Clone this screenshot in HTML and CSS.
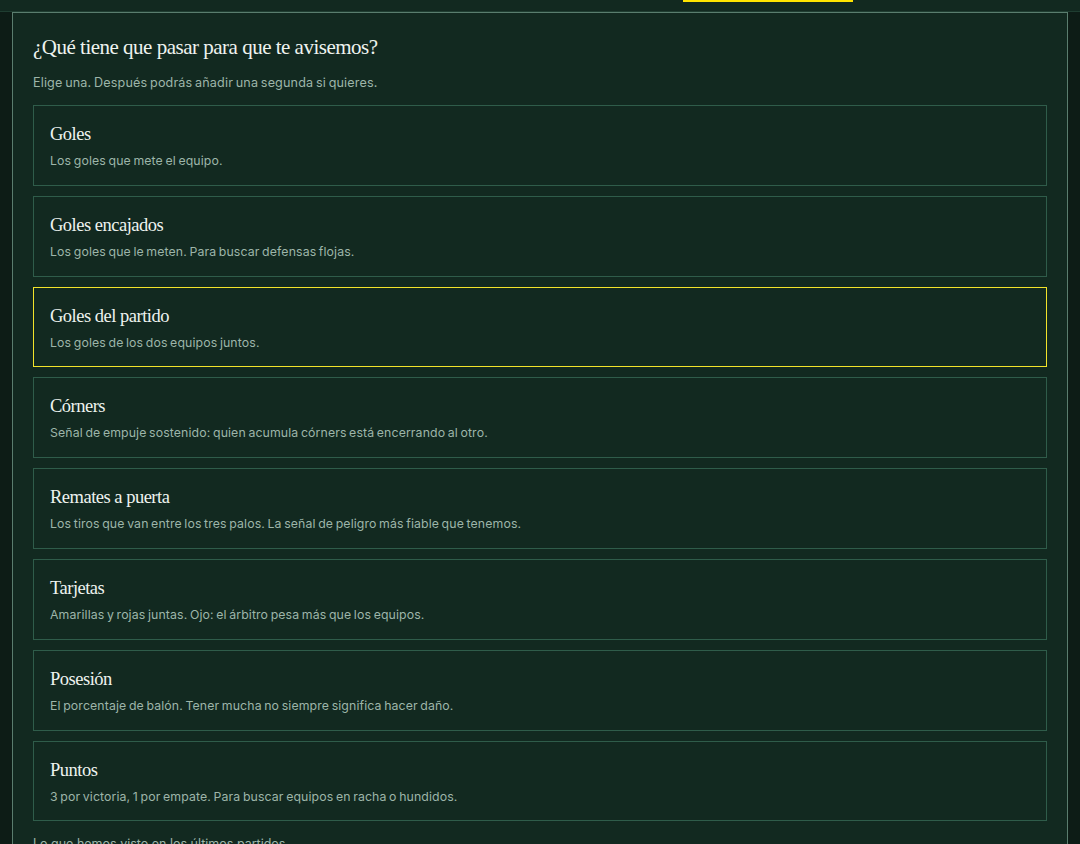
FILE: index.html
```html
<!DOCTYPE html>
<html lang="es">
<head>
<meta charset="utf-8">
<title>Avisos</title>
<link rel="stylesheet" href="styles.css">
</head>
<body>
<header class="topbar">
  <nav class="tabs">
    <span class="tab"></span>
    <span class="tab tab-active"></span>
  </nav>
</header>
<main class="main">
  <section class="panel">
    <h1 class="panel-title">¿Qué tiene que pasar para que te avisemos?</h1>
    <p class="panel-sub">Elige una. Después podrás añadir una segunda si quieres.</p>
    <ul class="options">
      <li class="option"><h2 class="option-title">Goles</h2><p class="option-desc">Los goles que mete el equipo.</p></li>
      <li class="option"><h2 class="option-title">Goles encajados</h2><p class="option-desc">Los goles que le meten. Para buscar defensas flojas.</p></li>
      <li class="option option-selected"><h2 class="option-title">Goles del partido</h2><p class="option-desc">Los goles de los dos equipos juntos.</p></li>
      <li class="option"><h2 class="option-title">Córners</h2><p class="option-desc">Señal de empuje sostenido: quien acumula córners está encerrando al otro.</p></li>
      <li class="option"><h2 class="option-title">Remates a puerta</h2><p class="option-desc">Los tiros que van entre los tres palos. La señal de peligro más fiable que tenemos.</p></li>
      <li class="option"><h2 class="option-title">Tarjetas</h2><p class="option-desc">Amarillas y rojas juntas. Ojo: el árbitro pesa más que los equipos.</p></li>
      <li class="option"><h2 class="option-title">Posesión</h2><p class="option-desc">El porcentaje de balón. Tener mucha no siempre significa hacer daño.</p></li>
      <li class="option"><h2 class="option-title">Puntos</h2><p class="option-desc">3 por victoria, 1 por empate. Para buscar equipos en racha o hundidos.</p></li>
    </ul>
    <p class="panel-foot">Lo que hemos visto en los últimos partidos</p>
  </section>
</main>
</body>
</html>
```
FILE: styles.css
```css
* { box-sizing: border-box; }
html, body { margin: 0; padding: 0; }
body {
  background: #0d1c16;
  font-family: "Inter", "Liberation Sans", sans-serif;
  color: #e8efe9;
  height: 844px;
  overflow: hidden;
}
.topbar {
  height: 12px;
  background: #122920;
  border-bottom: 1px solid #1f3d31;
}
.tabs {
  display: flex;
  padding-left: 513px;
  height: 100%;
}
.tab { width: 170px; }
.tab-active {
  height: 2px;
  background: #ffe400;
}
.main {
  padding: 0 12px;
}
.panel {
  background: #122920;
  border: 1px solid #5a7d6e;
  border-bottom: none;
  padding: 20px 20px 0 20px;
  min-height: 840px;
}
.panel-title {
  margin: 0;
  font-family: "Liberation Serif", serif;
  font-weight: normal;
  font-size: 21px;
  line-height: 28px;
  letter-spacing: -0.5px;
  color: #eef3ef;
}
.panel-sub {
  margin: 13px 0 13px;
  font-size: 12.6px;
  line-height: 18px;
  letter-spacing: 0.15px;
  word-spacing: -1px;
  color: #9db5a9;
}
.options {
  list-style: none;
  margin: 0;
  padding: 0;
  display: flex;
  flex-direction: column;
  gap: 10px;
}
.option {
  border: 1px solid #2f5c4a;
  padding: 16px 16px 0;
  height: 80.8px;
}
.option-selected { border-color: #f2e32a; }
.option-title {
  margin: 0;
  font-family: "Liberation Serif", serif;
  font-weight: normal;
  font-size: 18.5px;
  line-height: 24px;
  letter-spacing: -0.5px;
  color: #eef3ef;
}
.option-desc {
  margin: 6px 0 0;
  font-size: 12.3px;
  line-height: 18px;
  letter-spacing: 0.12px;
  word-spacing: -1px;
  color: #9db5a9;
}
.panel-foot {
  margin: 14px 0 0;
  font-size: 12.5px;
  line-height: 18px;
  color: #9db5a9;
}
```
